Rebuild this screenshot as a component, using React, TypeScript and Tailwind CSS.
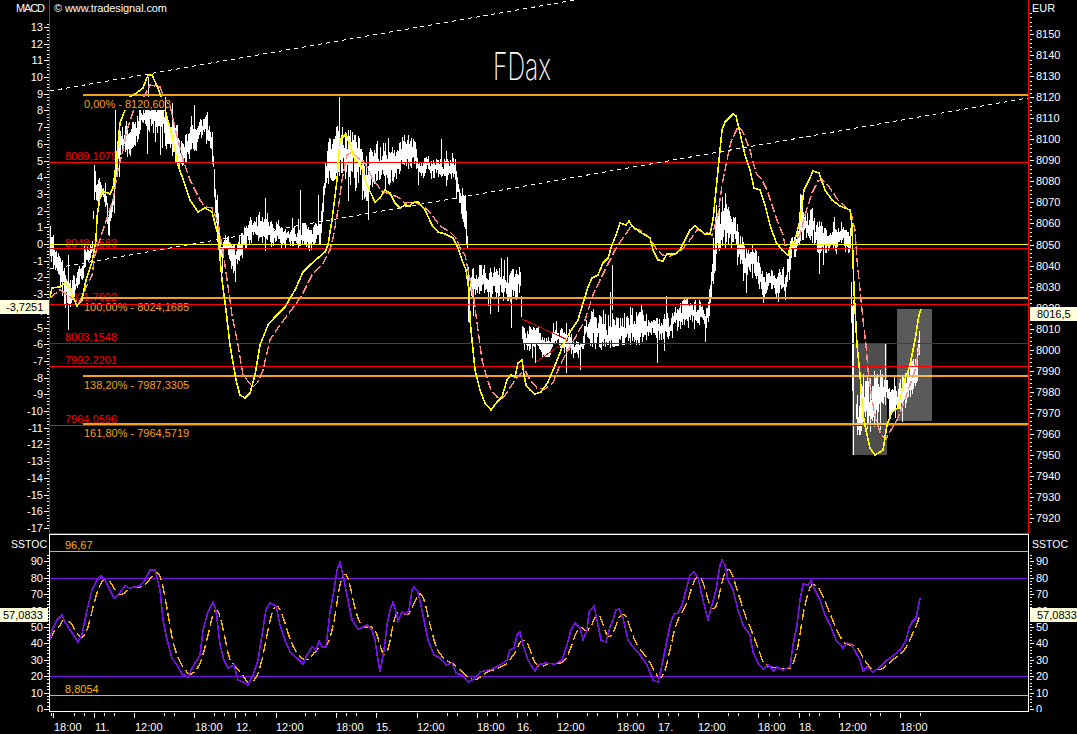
import React from 'react';

type Pt = [number, number];

const yellow: Pt[] = [[50,297],[52,288],[60,287],[65,283],[70,288],[73,297],[77,306],[82,300],[86,280],[92,262],[96,240],[97,217],[100,197],[103,191],[110,194],[113,188],[116,165],[120,123],[125,110],[130,97],[135,94],[143,88],[148,75],[152,75],[158,88],[165,110],[172,135],[178,165],[184,182],[190,200],[198,212],[205,208],[212,212],[218,235],[222,280],[226,310],[230,345],[236,380],[240,395],[245,398],[250,393],[255,375],[260,345],[268,325],[275,317],[285,307],[295,290],[303,272],[310,265],[318,258],[325,252],[328,245],[332,220],[337,180],[340,140],[346,134],[350,145],[355,160],[360,163],[367,185],[375,202],[380,198],[385,190],[390,193],[395,203],[400,208],[405,205],[410,206],[412,203],[418,202],[425,210],[432,225],[438,232],[445,234],[453,238],[458,248],[462,260],[466,270],[469,290],[470,320],[472,340],[475,370],[480,390],[485,403],[491,410],[497,402],[502,397],[507,380],[511,375],[515,377],[518,363],[522,360],[524,375],[526,385],[530,390],[535,394],[541,392],[548,382],[556,363],[563,345],[570,332],[578,320],[584,300],[588,287],[592,278],[598,275],[603,263],[608,258],[612,245],[616,235],[620,223],[626,225],[629,221],[632,226],[640,232],[650,238],[653,250],[658,260],[663,261],[667,254],[675,254],[680,250],[685,240],[690,230],[695,226],[700,230],[705,234],[710,234],[713,220],[717,180],[720,150],[722,130],[725,122],[730,117],[733,114],[736,116],[740,133],[745,155],[750,170],[754,188],[760,190],[765,205],[770,225],[776,242],[782,250],[788,255],[790,248],[795,240],[800,220],[804,190],[810,178],[813,171],[819,173],[825,190],[832,200],[840,206],[845,208],[850,210],[852,225],[853,260],[854,290],[857,345],[860,375],[863,415],[866,430],[870,448],[875,455],[880,452],[883,450],[887,425],[892,412],[898,408],[903,385],[910,365],[915,340],[919,315],[921,309]];

const pink: Pt[] = [[50,298],[60,290],[75,300],[79,303],[85,290],[92,275],[95,255],[103,230],[108,215],[113,200],[118,170],[123,150],[127,130],[133,112],[140,105],[150,85],[160,87],[165,100],[170,105],[175,128],[183,160],[190,180],[200,200],[205,207],[212,208],[218,222],[225,265],[232,315],[238,345],[243,375],[247,380],[253,387],[258,382],[263,370],[270,340],[278,328],[290,312],[302,295],[312,275],[322,265],[330,250],[333,238],[338,210],[342,180],[347,155],[352,152],[358,158],[362,160],[366,165],[372,178],[382,191],[392,195],[398,197],[405,203],[415,202],[425,207],[432,215],[440,226],[450,232],[456,238],[461,250],[465,255],[470,280],[474,300],[478,330],[482,360],[487,378],[491,390],[497,397],[503,398],[510,388],[515,380],[522,372],[526,372],[530,380],[537,388],[545,389],[553,383],[560,365],[568,350],[575,338],[585,320],[593,295],[600,280],[606,268],[615,250],[625,235],[630,228],[640,230],[650,238],[655,247],[662,255],[670,256],[680,252],[690,240],[697,230],[705,232],[712,235],[718,215],[722,185],[727,160],[731,142],[735,133],[738,127],[742,130],[746,140],[750,150],[756,173],[762,180],[767,190],[772,205],[777,220],[783,235],[785,245],[790,247],[795,242],[800,235],[805,215],[812,193],[818,181],[823,180],[830,188],[838,200],[846,207],[851,213],[855,230],[857,260],[860,290],[863,320],[866,345],[868,370],[872,400],[876,420],[881,435],[886,439],[891,430],[897,420],[903,405],[910,385],[915,370],[919,348]];

const purple: Pt[] = [[50,640],[52,630],[57,620],[62,615],[65,622],[70,630],[78,642],[82,635],[87,610],[92,590],[97,580],[101,576],[105,580],[110,590],[114,598],[118,595],[125,586],[130,588],[140,586],[145,580],[150,570],[155,570],[160,590],[163,620],[167,640],[172,658],[177,665],[182,674],[188,677],[192,668],[197,660],[200,655],[203,630],[208,612],[213,602],[216,610],[220,645],[224,660],[228,668],[234,665],[238,680],[243,682],[248,685],[253,675],[258,660],[262,635],[266,610],[270,603],[276,606],[280,625],[285,640],[290,652],[297,658],[303,664],[307,655],[312,647],[316,650],[319,641],[322,647],[326,647],[330,612],[334,590],[337,570],[340,562],[344,580],[348,600],[352,620],[358,629],[361,628],[367,625],[372,630],[375,640],[378,660],[380,672],[384,650],[387,625],[390,610],[393,602],[396,612],[398,621],[402,612],[406,614],[409,610],[412,590],[414,587],[418,592],[423,615],[428,640],[434,655],[440,658],[446,665],[452,663],[456,673],[462,675],[468,682],[474,679],[480,672],[492,669],[500,665],[507,660],[510,650],[514,648],[517,635],[520,632],[523,645],[528,660],[532,667],[535,671],[538,665],[545,663],[555,664],[562,660],[567,645],[571,630],[575,623],[580,628],[583,640],[587,630],[589,612],[594,606],[597,620],[601,640],[606,642],[610,627],[613,620],[616,610],[619,609],[623,618],[628,640],[634,648],[640,655],[647,665],[653,680],[658,682],[662,665],[667,640],[670,625],[674,614],[678,613],[682,605],[686,590],[690,575],[694,572],[698,578],[703,600],[708,620],[712,605],[716,590],[720,565],[722,560],[725,565],[728,580],[733,590],[738,610],[743,625],[750,635],[753,652],[758,663],[763,669],[768,665],[774,671],[777,667],[783,670],[790,667],[793,645],[797,625],[800,600],[803,584],[808,585],[811,581],[815,590],[820,600],[825,615],[830,625],[836,640],[843,648],[847,643],[851,644],[856,653],[860,660],[863,671],[867,667],[873,672],[880,667],[887,660],[893,656],[900,650],[906,640],[909,628],[912,622],[916,618],[920,598]];

// x, top, bottom of the white price band
const band: [number, number, number][] = [[50,228,266],[58,248,276],[65,265,305],[75,280,302],[85,253,270],[92,243,264],[94,170,200],[105,185,208],[108,205,238],[112,195,222],[116,150,178],[120,125,155],[135,125,155],[140,108,132],[160,105,145],[170,115,155],[180,128,165],[190,120,155],[205,112,138],[212,128,162],[215,160,218],[218,215,262],[222,238,275],[225,238,252],[235,240,275],[240,238,262],[250,215,242],[265,215,242],[285,226,247],[320,226,247],[325,165,205],[330,132,180],[340,128,172],[360,140,195],[367,152,198],[375,140,178],[385,146,182],[395,145,182],[400,138,168],[415,138,168],[420,157,175],[450,158,178],[455,162,188],[460,182,208],[465,192,228],[467,225,262],[468,262,320],[470,268,296],[505,268,298],[520,270,300],[522,328,354],[570,332,354],[582,343,356],[586,315,347],[600,310,347],[620,304,342],[640,304,342],[650,325,342],[665,316,342],[680,302,327],[700,302,326],[705,316,328],[708,290,324],[710,278,302],[712,232,288],[718,195,248],[735,215,250],[745,235,272],[752,248,282],[758,255,284],[763,272,296],[785,272,297],[788,248,288],[792,238,264],[796,232,252],[800,195,244],[815,215,250],[830,225,250],[850,225,252],[851,280,320],[853,300,455],[856,378,432],[880,372,430],[887,372,412],[893,392,428],[900,382,422],[910,368,398],[916,352,388],[919,312,372]];

const spikes: [number, number, number][] = [[68,265,332],[94,165,200],[115,110,165],[148,77,115],[160,110,155],[207,112,130],[235,255,282],[265,198,235],[300,190,235],[318,195,235],[339,97,135],[350,130,185],[388,138,180],[408,135,160],[441,139,170],[488,280,306],[498,280,312],[507,257,292],[511,280,328],[516,270,300],[535,340,363],[612,265,310],[610,292,320],[657,335,363],[763,280,303],[778,280,302],[885,344,400]];

const at = (pts: Pt[], x: number) => {
  for (let i = 1; i < pts.length; i++) {
    if (x <= pts[i][0]) {
      const [x0, y0] = pts[i - 1];
      const [x1, y1] = pts[i];
      return y0 + ((y1 - y0) * (x - x0)) / (x1 - x0);
    }
  }
  return pts[pts.length - 1][1];
};

const line = (pts: Pt[]) => pts.map(([x, y]) => `${x},${y}`).join(' ');

const pricePath = () => {
  let seed = 4711;
  const rnd = () => {
    seed = (seed * 16807) % 2147483647;
    return seed / 2147483647;
  };
  const top = band.map(([x, t]) => [x, t] as Pt);
  const bottom = band.map(([x, , b]) => [x, b] as Pt);
  let d = '';
  let walk = 0;
  for (let x = 50; x <= 919; x++) {
    if (x > 852 && x < 856 && x !== 853) continue;
    const t = at(top, x);
    const b = at(bottom, x);
    const h = b - t;
    walk = walk * 0.75 + (rnd() - 0.5) * 0.7;
    const mid = (t + b) / 2 + walk * h * 0.5;
    const half = h * (0.12 + rnd() * 0.42);
    let y1 = Math.max(t - 3, mid - half);
    let y2 = Math.min(b + 3, mid + half);
    if (rnd() < 0.05) y2 += 8 + rnd() * 16;
    if (rnd() < 0.04) y1 -= 6 + rnd() * 10;
    if (x === 853) {
      y1 = t;
      y2 = b;
    }
    d += `M${x} ${y1.toFixed(0)}V${y2.toFixed(0)}`;
  }
  spikes.forEach(([x, a, b]) => {
    d += `M${x} ${a}V${b}`;
  });
  return d;
};

// slow stochastic: moving average of the fast one
const slowStoch = () => {
  const pts: Pt[] = [];
  for (let x = 50; x <= 920; x += 2) {
    let sum = 0;
    let n = 0;
    for (let k = Math.max(50, x - 10); k <= x; k += 2) {
      sum += at(purple, k);
      n++;
    }
    pts.push([x, sum / n]);
  }
  return pts;
};

const hLines = [
  { y: 95, x: 83, c: 'stroke-[#f5a114]', w: 2 },
  { y: 162, x: 50, c: 'stroke-[#ff0000]', w: 1 },
  { y: 244.5, x: 50, c: 'stroke-[#ffff00]', w: 1 },
  { y: 248.5, x: 50, c: 'stroke-[#ff0000]', w: 1 },
  { y: 298, x: 83, c: 'stroke-[#f5a114]', w: 2 },
  { y: 304.5, x: 50, c: 'stroke-[#ff0000]', w: 1 },
  { y: 343.5, x: 50, c: 'stroke-[#d80000]', w: 1 },
  { y: 366.5, x: 50, c: 'stroke-[#ff0000]', w: 1 },
  { y: 376, x: 83, c: 'stroke-[#f5a114]', w: 2 },
  { y: 425.5, x: 50, c: 'stroke-[#ff0000]', w: 1 },
  { y: 424, x: 83, c: 'stroke-[#f5a114]', w: 2 },
];

const levelLabels = [
  { x: 84, y: 108, t: '0,00% - 8120,603', c: 'fill-[#f5a114]', box: 82 },
  { x: 65, y: 160, t: '8089,1079', c: 'fill-[#ff0000]', box: 0 },
  { x: 65, y: 247, t: '8048,2583', c: 'fill-[#ff0000]', box: 0 },
  { x: 65, y: 301, t: '8021,7022', c: 'fill-[#ff0000]', box: 0 },
  { x: 84, y: 311, t: '100,00% - 8024,1685', c: 'fill-[#f5a114]', box: 0 },
  { x: 65, y: 341, t: '8003,1548', c: 'fill-[#ff0000]', box: 52 },
  { x: 65, y: 364, t: '7992,2201', c: 'fill-[#ff0000]', box: 0 },
  { x: 84, y: 389, t: '138,20% - 7987,3305', c: 'fill-[#f5a114]', box: 0 },
  { x: 65, y: 423, t: '7964,0596', c: 'fill-[#ff0000]', box: 0 },
  { x: 84, y: 437, t: '161,80% - 7964,5719', c: 'fill-[#f5a114]', box: 0 },
];

const macdY = (v: number) => 244 - 16.7 * v;
const eurY = (v: number) => 34.3 + (21.02 * (8150 - v)) / 10;
const stochY = (v: number) => 709 - 1.64 * v;

const range = (a: number, b: number) => Array.from({ length: b - a + 1 }, (_, i) => a + i);

const macdTicks = range(-85, 70).map((i) => i / 5);
const eurTicks = range(7918 / 2, 8160 / 2).map((i) => i * 2);
const stochTicks = range(0, 50).map((i) => i * 2);

const majorTicks = [53, 94, 134, 194, 235, 276, 336, 376, 417, 477, 517, 557, 617, 658, 698, 758, 799, 839, 900];
const minorTicks = [51, 74, 84, 104, 114, 164, 174, 214, 224, 245, 256, 305, 315, 346, 356, 447, 457, 487, 497, 527, 537, 587, 597, 627, 637, 668, 678, 728, 738, 769, 779, 809, 819, 870, 880, 920];
const timeLabels: [number, string][] = [[54,'18:00'],[95,'11.'],[135,'12:00'],[195,'18:00'],[236,'12.'],[276,'12:00'],[336,'18:00'],[376,'15.'],[417,'12:00'],[477,'18:00'],[517,'16.'],[557,'12:00'],[617,'18:00'],[658,'17.'],[698,'12:00'],[758,'18:00'],[799,'18.'],[839,'12:00'],[900,'18:00']];

const Tag = ({ text, className }: { text: string; className: string }) => (
  <div className={`absolute h-[14px] bg-[#ffffdc] text-[11px] leading-[15px] text-black ${className}`}>{text}</div>
);

const Ticks = ({ ys, x, len }: { ys: number[]; x: number; len: number }) => (
  <g className="stroke-white" shapeRendering="crispEdges">
    {ys.map((y, i) => (
      <line key={i} x1={x} x2={x + len} y1={Math.round(y) + 0.5} y2={Math.round(y) + 0.5} />
    ))}
  </g>
);

const App = () => {
  const slow = slowStoch();
  return (
    <div className="w-[1077px] h-[734px] bg-black flex flex-col overflow-hidden text-[11px] font-['Liberation_Sans',Arial,sans-serif]">
      {/* MACD / Kurs */}
      <div className="flex h-[534px]">
        <div className="relative w-[49px]">
          <svg width="49" height="534" viewBox="0 0 49 534">
            <text x="16" y="12" textLength="29" className="fill-white">MACD</text>
            {range(-17, 13).map((v) => (
              <text key={v} x="43" y={macdY(v) + 4} textAnchor="end" className="fill-white">{v}</text>
            ))}
            <Ticks ys={macdTicks.slice(0, 152).map(macdY)} x={47} len={2} />
            <Ticks ys={range(-17, 13).map(macdY)} x={44} len={5} />
          </svg>
          <Tag text="-3,7251" className="left-0 top-[300px] w-[49px] pl-[6px]" />
        </div>
        <div className="w-[980px] border-x border-b border-[#ff0000]">
          <svg width="978" height="533" viewBox="50 0 978 533">
            <text x="54" y="12" textLength="113" className="fill-white">© www.tradesignal.com</text>
            <text x="493" y="80" fontSize="38" textLength="58" lengthAdjust="spacingAndGlyphs" className="fill-white font-['Inter'] font-extralight">FDax</text>

            {levelLabels.filter((l) => !l.box).map((l) => (
              <text key={l.t} x={l.x} y={l.y} className={l.c}>{l.t}</text>
            ))}

            <rect x="852" y="343" width="35" height="112" className="fill-[#4e4e4e]" />
            <rect x="897" y="309" width="35" height="112" className="fill-[#5a5a5a]" />

            <path d={pricePath()} className="stroke-white fill-none" shapeRendering="crispEdges" />

            {hLines.map((l) => (
              <line key={l.y} x1={l.x} x2="1028" y1={l.y} y2={l.y} strokeWidth={l.w} className={l.c} shapeRendering="crispEdges" />
            ))}
            <rect x="852" y="423" width="35" height="2" className="fill-white/30" />
            <rect x="852" y="375" width="35" height="2" className="fill-white/30" />
            <rect x="897" y="375" width="35" height="2" className="fill-white/30" />

            {/* Trendlinien */}
            <polyline points="50,91 575,0" strokeDasharray="4 4" className="stroke-white fill-none" shapeRendering="crispEdges" />
            <polyline points="50,269 1028,98" strokeDasharray="4 4" className="stroke-white fill-none" shapeRendering="crispEdges" />
            <polyline points="522,319 568,340 536,362" className="stroke-[#e00000] fill-none" shapeRendering="crispEdges" />

            <polyline points={line(pink)} strokeDasharray="9 3" strokeWidth="1.4" className="stroke-[#ff8c82] fill-none" shapeRendering="crispEdges" />
            <polyline points={line(yellow)} className="stroke-[#ffff00] fill-none" strokeWidth="1.6" shapeRendering="crispEdges" />

            {levelLabels.filter((l) => l.box).map((l) => (
              <g key={l.t}>
                <rect x={l.x - 1} y={l.y - 11} width={l.box} height="13" className="fill-black" />
                <text x={l.x} y={l.y} className={l.c}>{l.t}</text>
              </g>
            ))}
          </svg>
        </div>
        <div className="relative w-[48px]">
          <svg width="48" height="534" viewBox="1029 0 48 534">
            <text x="1032" y="12" className="fill-white">EUR</text>
            {range(0, 23).map((i) => (
              <text key={i} x="1036" y={eurY(8150 - i * 10) + 4} className="fill-white">{8150 - i * 10}</text>
            ))}
            <Ticks ys={eurTicks.map(eurY)} x={1030} len={2} />
            <Ticks ys={range(0, 23).map((i) => eurY(8150 - i * 10))} x={1030} len={4} />
          </svg>
          <Tag text="8016,5" className="left-px top-[307px] w-[47px] pl-[7px]" />
        </div>
      </div>

      {/* SSTOC */}
      <div className="flex h-[178px]">
        <div className="relative w-[49px]">
          <svg width="49" height="178" viewBox="0 534 49 178">
            <text x="11" y="548" textLength="36" lengthAdjust="spacingAndGlyphs" className="fill-white">SSTOC</text>
            {range(0, 9).map((i) => (
              <text key={i} x="43" y={stochY(i * 10) + 4} textAnchor="end" className="fill-white">{i * 10}</text>
            ))}
            <Ticks ys={stochTicks.slice(0, 48).map(stochY)} x={47} len={2} />
            <Ticks ys={range(0, 9).map((i) => stochY(i * 10))} x={44} len={5} />
          </svg>
          <Tag text="57,0833" className="left-0 top-[74px] w-[48px] pl-[3px]" />
        </div>
        <div className="w-[980px] border border-white">
          <svg width="978" height="176" viewBox="50 535 978 176">
            <text x="65" y="549" className="fill-[#ffb400]">96,67</text>
            <text x="65" y="693" className="fill-[#ffb400]">8,8054</text>
            <line x1="50" x2="1028" y1="551.5" y2="551.5" className="stroke-[#ffb400]" shapeRendering="crispEdges" />
            <line x1="50" x2="1028" y1="695.5" y2="695.5" className="stroke-[#ffb400]" shapeRendering="crispEdges" />
            <line x1="50" x2="1028" y1="578.5" y2="578.5" className="stroke-[#7a10e8]" shapeRendering="crispEdges" />
            <line x1="50" x2="1028" y1="676.5" y2="676.5" className="stroke-[#7a10e8]" shapeRendering="crispEdges" />
            <polyline points={line(slow)} strokeDasharray="11 4" strokeWidth="1.4" className="stroke-[#ffb400] fill-none" shapeRendering="crispEdges" />
            <polyline points={line(purple)} strokeWidth="1.6" className="stroke-[#7a10e8] fill-none" shapeRendering="crispEdges" />
          </svg>
        </div>
        <div className="relative w-[48px]">
          <svg width="48" height="178" viewBox="1029 534 48 178">
            <text x="1032" y="548" textLength="36" lengthAdjust="spacingAndGlyphs" className="fill-white">SSTOC</text>
            {range(0, 9).map((i) => (
              <text key={i} x="1036" y={stochY(i * 10) + 4} className="fill-white">{i * 10}</text>
            ))}
            <Ticks ys={stochTicks.slice(0, 48).map(stochY)} x={1030} len={2} />
            <Ticks ys={range(0, 9).map((i) => stochY(i * 10))} x={1030} len={4} />
          </svg>
          <Tag text="57,0833" className="left-px top-[74px] w-[47px] pl-[7px]" />
        </div>
      </div>

      {/* Zeitachse */}
      <svg width="1077" height="22" viewBox="0 712 1077 22">
        <g className="stroke-white" shapeRendering="crispEdges">
          {majorTicks.map((x) => (
            <line key={x} x1={x + 0.5} x2={x + 0.5} y1="713" y2="718" />
          ))}
          {minorTicks.map((x) => (
            <line key={x} x1={x + 0.5} x2={x + 0.5} y1="713" y2="716" />
          ))}
        </g>
        {timeLabels.map(([x, t]) => (
          <text key={x} x={x} y="731" className="fill-white">{t}</text>
        ))}
      </svg>
    </div>
  );
};

export default App;
